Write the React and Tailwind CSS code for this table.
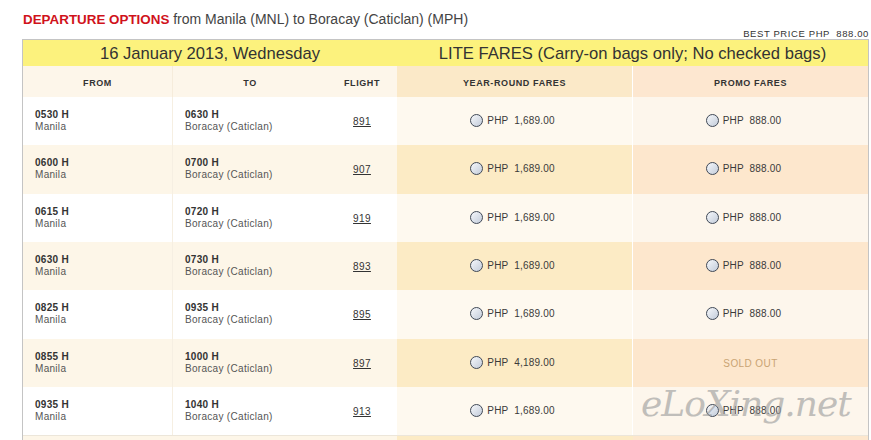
import React from 'react';

const flights = [
  { dep: '0530 H', arr: '0630 H', no: '891', year: '1,689.00', promo: '888.00' },
  { dep: '0600 H', arr: '0700 H', no: '907', year: '1,689.00', promo: '888.00' },
  { dep: '0615 H', arr: '0720 H', no: '919', year: '1,689.00', promo: '888.00' },
  { dep: '0630 H', arr: '0730 H', no: '893', year: '1,689.00', promo: '888.00' },
  { dep: '0825 H', arr: '0935 H', no: '895', year: '1,689.00', promo: '888.00' },
  { dep: '0855 H', arr: '1000 H', no: '897', year: '4,189.00', promo: null },
  { dep: '0935 H', arr: '1040 H', no: '913', year: '1,689.00', promo: '888.00' },
];

function Radio() {
  return (
    <span className="inline-block w-[13px] h-[13px] rounded-full border border-[#3f4856] bg-gradient-to-br from-[#f6f8fb] to-[#c3ccda] mr-[4px] shrink-0" />
  );
}

function Price({ value, shift }) {
  return (
    <div className={`flex items-center justify-center pt-[16px] ${shift ? 'pr-[14px]' : 'pr-[4px]'}`}>
      <Radio />
      <span className="text-[10px] text-[#3a3a3a] tracking-[0.2px] whitespace-pre">{'PHP  ' + value}</span>
    </div>
  );
}

function Row({ f, i }) {
  const alt = i % 2 === 1;
  return (
    <div className="grid grid-cols-[150px_154px_70px_236px_235px] h-[48.33px]">
      <div className={`pl-[12px] pt-[12px] border-r border-[#f6efe2] ${alt ? 'bg-[#fdf6e8]' : 'bg-white'}`}>
        <div className="text-[10px] font-bold text-[#333] tracking-[0.3px] leading-[12px]">{f.dep}</div>
        <div className="text-[10px] text-[#555] tracking-[0.3px] leading-[12px]">Manila</div>
      </div>
      <div className={`pl-[12px] pt-[12px] ${alt ? 'bg-[#fdf6e8]' : 'bg-white'}`}>
        <div className="text-[10px] font-bold text-[#333] tracking-[0.3px] leading-[12px]">{f.arr}</div>
        <div className="text-[10px] text-[#555] tracking-[0.3px] leading-[12px]">Boracay (Caticlan)</div>
      </div>
      <div className={`text-center pt-[11px] ${alt ? 'bg-[#fdf6e8]' : 'bg-white'}`}>
        <span className="text-[10px] text-[#333] underline tracking-[0.4px]">{f.no}</span>
      </div>
      <div className={`border-r border-white ${alt ? 'bg-[#fcebc5]' : 'bg-[#fef9ef]'}`}>
        <Price value={f.year} />
      </div>
      <div className={alt ? 'bg-[#fde7cd]' : 'bg-[#fdf6ec]'}>
        {f.promo ? (
          <Price value={f.promo} shift />
        ) : (
          <div className="text-center pt-[17px] text-[10px] text-[#c9a473] tracking-[0.4px]">SOLD OUT</div>
        )}
      </div>
    </div>
  );
}

export default function App() {
  return (
    <div className="relative w-[871px] h-[440px] overflow-hidden bg-white font-['Liberation_Sans',Arial,sans-serif]">
      <div className="pl-[23px] pt-[11px] h-[27px] text-[14px] leading-[16px] text-[#444]">
        <span className="font-bold text-[#d0121b] text-[13.4px] leading-none">DEPARTURE OPTIONS</span> from Manila (MNL) to Boracay (Caticlan) (MPH)
      </div>
      <div className="text-right pr-[2px] pt-[1px] text-[9.5px] leading-[11px] text-[#333] tracking-[0.6px] whitespace-pre">
        {'BEST PRICE PHP  888.00'}
      </div>
      <div className="ml-[22px] w-[847px] border-l border-r border-t border-[#c4c4c4]">
        <div className="grid grid-cols-[374px_471px] h-[26px] bg-[#fcf27d] text-[16.6px] leading-[27px] text-[#333]">
          <div className="text-center">16 January 2013, Wednesday</div>
          <div className="text-center">LITE FARES (Carry-on bags only; No checked bags)</div>
        </div>
        <div className="grid grid-cols-[150px_154px_70px_236px_235px] h-[31px] text-[9px] font-bold text-[#333] tracking-[0.6px] leading-[35px]">
          <div className="text-center bg-[#fdf6ea] border-r border-[#f6ecdb]">FROM</div>
          <div className="text-center bg-[#fdf6ea]">TO</div>
          <div className="text-center bg-[#fdf6ea]">FLIGHT</div>
          <div className="text-center bg-[#fbe9c8] border-r border-white">YEAR-ROUND FARES</div>
          <div className="text-center bg-[#fde7d0]">PROMO FARES</div>
        </div>
        {flights.map((f, i) => (
          <Row key={f.no} f={f} i={i} />
        ))}
        <div className="grid grid-cols-[150px_154px_70px_236px_235px] h-[20px] border-t border-[#ece6da]">
          <div className="bg-[#fdf6e8]" />
          <div className="bg-[#fdf6e8]" />
          <div className="bg-[#fdf6e8]" />
          <div className="bg-[#fcebc5]" />
          <div className="bg-[#fde7cd]" />
        </div>
      </div>
      <div className="absolute left-[641px] top-[384px] text-[36px] leading-[40px] italic text-[#999] opacity-60 font-['DejaVu_Serif',serif] tracking-[-1px] pointer-events-none">
        eLoXing.net
      </div>
    </div>
  );
}
